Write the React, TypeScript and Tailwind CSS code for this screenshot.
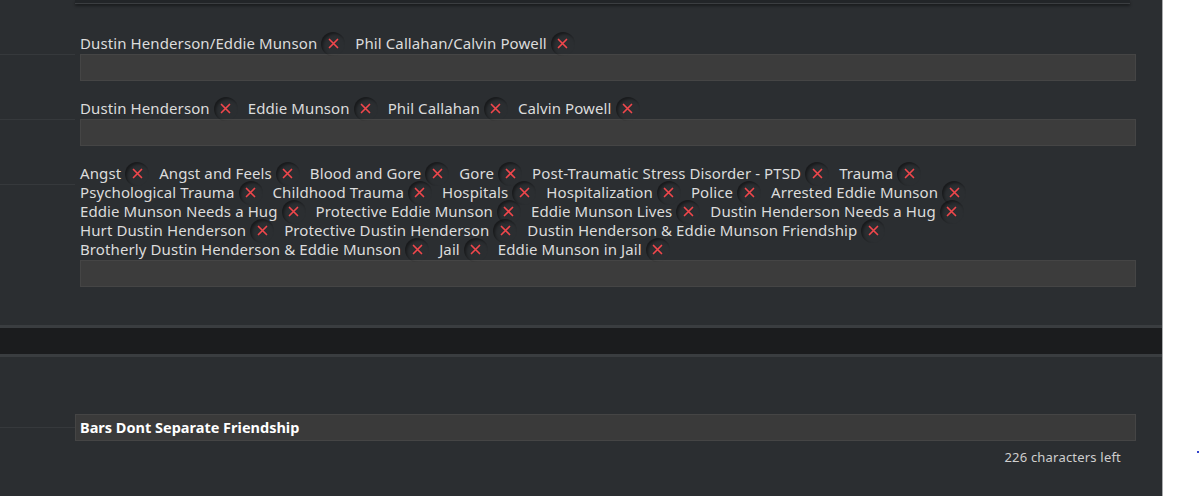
import { ReactNode } from "react";

const relationships = [["Dustin Henderson/Eddie Munson", "Phil Callahan/Calvin Powell"]];
const characters = [["Dustin Henderson", "Eddie Munson", "Phil Callahan", "Calvin Powell"]];
const freeforms = [
  ["Angst", "Angst and Feels", "Blood and Gore", "Gore", "Post-Traumatic Stress Disorder - PTSD", "Trauma"],
  ["Psychological Trauma", "Childhood Trauma", "Hospitals", "Hospitalization", "Police", "Arrested Eddie Munson"],
  ["Eddie Munson Needs a Hug", "Protective Eddie Munson", "Eddie Munson Lives", "Dustin Henderson Needs a Hug"],
  ["Hurt Dustin Henderson", "Protective Dustin Henderson", "Dustin Henderson & Eddie Munson Friendship"],
  ["Brotherly Dustin Henderson & Eddie Munson", "Jail", "Eddie Munson in Jail"],
];

function Tag({ name }: { name: string }) {
  return (
    <span className="inline-flex items-center mr-[10px]">
      <span>{name}</span>
      <span className="ml-[4px] -my-[2px] flex h-[24px] w-[24px] items-center justify-center rounded-full shadow-[inset_2px_2px_3px_rgba(0,0,0,0.45)]">
        <svg width="11" height="11" viewBox="0 0 11 11" className="text-[#f0474c]">
          <path d="M1.5 1.5l8 8M9.5 1.5l-8 8" stroke="currentColor" strokeWidth="1.7" strokeLinecap="round" />
        </svg>
      </span>
    </span>
  );
}

function TagField({ lines }: { lines: string[][] }) {
  return (
    <div className="flex">
      <div className="w-[75px] shrink-0">
        <div className="h-[21px] border-b border-[#36393c]" />
      </div>
      <div className="ml-[5px] w-[1056px]">
        <div className="text-[15px] leading-[19px] tracking-[0.1px] text-[#dcdcdc]">
          {lines.map((line, i) => (
            <div key={i} className="flex h-[19px] items-center">
              {line.map((t) => (
                <Tag key={t} name={t} />
              ))}
            </div>
          ))}
        </div>
        <div className="mt-[1px] h-[27px] border border-[#454545] bg-[#3c3c3c]" />
      </div>
    </div>
  );
}

function Panel({ children }: { children: ReactNode }) {
  return <div className="bg-[#2b2e31]">{children}</div>;
}

export default function App() {
  return (
    <div className="flex h-[496px] w-[1200px] overflow-hidden bg-white" style={{ fontFamily: '"Noto Sans", "Open Sans", sans-serif' }}>
      <div className="flex w-[1163px] shrink-0 flex-col border-r border-[#a9abad] bg-[#2b2e31]">
        <Panel>
          <div className="ml-[75px] h-[4px] w-[1055px] border-b border-[#3b3e41] bg-[#222528] shadow-[0_2px_3px_rgba(0,0,0,0.4)]" />
          <div className="flex flex-col gap-[18px] pt-[30px] pb-[38px]">
            <TagField lines={relationships} />
            <TagField lines={characters} />
            <TagField lines={freeforms} />
          </div>
        </Panel>
        <div className="h-[3px] bg-[#3a3d40]" />
        <div className="h-[26px] bg-[#1b1c1e]" />
        <div className="h-[3px] bg-[#3a3d40]" />
        <Panel>
          <div className="flex pt-[57px]">
            <div className="w-[75px] shrink-0">
              <div className="h-[14px] border-b border-[#36393c]" />
            </div>
            <div className="w-[1061px]">
              <div className="flex h-[27px] items-center border border-[#454545] bg-[#3a3a3a] pl-[4px] text-[14.5px] font-bold text-white">
                Bars Dont Separate Friendship
              </div>
              <div className="mt-[7px] pr-[15px] text-right text-[13px] tracking-[0.2px] text-[#cfcfcf]">226 characters left</div>
            </div>
          </div>
        </Panel>
      </div>
      <div className="relative flex-1">
        <span className="absolute left-[34px] top-[451px] h-[2px] w-[2px] bg-[#3344cc]" />
      </div>
    </div>
  );
}
